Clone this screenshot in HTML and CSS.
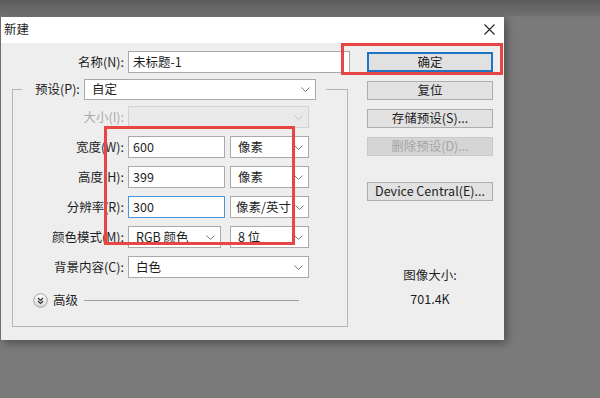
FILE: index.html
```html
<!DOCTYPE html>
<html>
<head>
    <meta charset="UTF-8">
    <title>新建</title>
    <link rel="stylesheet" href="styles.css">
</head>
<body>

<div class="dialog">
    <div class="titlebar">
        <span>新建</span>
        <svg class="close" width="11" height="11" viewBox="0 0 11 11"><path d="M0.5 0.5L10.5 10.5M10.5 0.5L0.5 10.5" stroke="#222" stroke-width="1.1" fill="none"/></svg>
    </div>
    <div class="main">
        <div class="form">
            <div class="name-row">
                <span class="label">名称(N):</span>
                <div class="field w-name">未标题-1</div>
            </div>
            <fieldset class="group">
                <legend>
                    <span class="legend-label">预设(P):</span>
                    <div class="select w-preset"><span>自定</span><svg class="chev" width="9" height="5" viewBox="0 0 9 5"><polyline points="0.5,0.5 4.5,4.5 8.5,0.5"/></svg></div>
                </legend>
                <div class="grid">
                    <span class="label off">大小(I):</span>
                    <div class="select off"><span></span><svg class="chev" width="9" height="5" viewBox="0 0 9 5"><polyline points="0.5,0.5 4.5,4.5 8.5,0.5"/></svg></div>

                    <span class="label">宽度(W):</span>
                    <div class="pair">
                        <div class="field w-num">600</div>
                        <div class="select w-unit"><span>像素</span><svg class="chev" width="9" height="5" viewBox="0 0 9 5"><polyline points="0.5,0.5 4.5,4.5 8.5,0.5"/></svg></div>
                    </div>

                    <span class="label">高度(H):</span>
                    <div class="pair">
                        <div class="field w-num">399</div>
                        <div class="select w-unit"><span>像素</span><svg class="chev" width="9" height="5" viewBox="0 0 9 5"><polyline points="0.5,0.5 4.5,4.5 8.5,0.5"/></svg></div>
                    </div>

                    <span class="label">分辨率(R):</span>
                    <div class="pair">
                        <div class="field w-num focus">300</div>
                        <div class="select w-unit tight"><span>像素/英寸</span><svg class="chev" width="9" height="5" viewBox="0 0 9 5"><polyline points="0.5,0.5 4.5,4.5 8.5,0.5"/></svg></div>
                    </div>

                    <span class="label">颜色模式(M):</span>
                    <div class="pair">
                        <div class="select w-mode"><span>RGB 颜色</span><svg class="chev" width="9" height="5" viewBox="0 0 9 5"><polyline points="0.5,0.5 4.5,4.5 8.5,0.5"/></svg></div>
                        <div class="select w-unit"><span>8 位</span><svg class="chev" width="9" height="5" viewBox="0 0 9 5"><polyline points="0.5,0.5 4.5,4.5 8.5,0.5"/></svg></div>
                    </div>

                    <span class="label">背景内容(C):</span>
                    <div class="select"><span>白色</span><svg class="chev" width="9" height="5" viewBox="0 0 9 5"><polyline points="0.5,0.5 4.5,4.5 8.5,0.5"/></svg></div>
                </div>
                <div class="adv">
                    <svg class="adv-icon" width="15" height="15" viewBox="0 0 15 15">
                        <defs><linearGradient id="g" x1="0" y1="0" x2="0" y2="1"><stop offset="0" stop-color="#ffffff"/><stop offset="1" stop-color="#d8d8d8"/></linearGradient></defs>
                        <circle cx="7.5" cy="7.5" r="6.8" fill="url(#g)" stroke="#a3a3a3"/>
                        <polyline points="5,5 7.5,7.5 10,5" fill="none" stroke="#333" stroke-width="1.2"/>
                        <polyline points="5,8 7.5,10.5 10,8" fill="none" stroke="#333" stroke-width="1.2"/>
                    </svg>
                    <span class="adv-text">高级</span>
                    <span class="adv-line"></span>
                </div>
            </fieldset>
        </div>
        <div class="side">
            <div class="btn primary">确定</div>
            <div class="btn">复位</div>
            <div class="btn">存储预设(S)...</div>
            <div class="btn off">删除预设(D)...</div>
            <div class="btn gap">Device Central(E)...</div>
            <div class="size-title">图像大小:</div>
            <div class="size-value">701.4K</div>
        </div>
    </div>
</div>

<div class="mark mark-ok"></div>
<div class="mark mark-size"></div>

</body>
</html>
```

FILE: styles.css
```css
*{ margin: 0; padding: 0; box-sizing: border-box;}
body { height: 398px; overflow: hidden; padding-top: 17px; background: #7a7a7a linear-gradient(#5b5b5b 0, #717171 16px, #7a7a7a 17px); font: 12.5px/1 "Noto Sans CJK SC", sans-serif; color: #1e1e1e; position: relative;}

.dialog { width: 504px; height: 323px; background: #eeeeee; box-shadow: 3px 3px 8px rgba(0,0,0,.35); border-left: 1px solid #6f6f6f;}
.titlebar { height: 26px; background: #fff; display: flex; align-items: center; justify-content: space-between; padding: 0 9px 2px 3px;}
.main { display: flex; height: 297px;}
.form { width: 354px;}
.side { width: 126px; margin-left: 12px;}

.label { text-align: right; white-space: nowrap;}
.label.off { color: #ababab;}
.name-row { display: flex; align-items: center; height: 22px; margin-top: 8px;}
.name-row .label { width: 127px; padding-right: 4px;}

.field { height: 22px; background: #fff; border: 1px solid #a9a9a9; display: flex; align-items: center; padding-left: 4px;}
.field.focus { border-color: #4a94d8;}
.w-name { width: 222px;}
.w-num { width: 97px;}

.select { height: 22px; background: #fff; border: 1px solid #a9a9a9; display: flex; align-items: center; justify-content: space-between; padding: 0 5px 0 7px; white-space: nowrap; overflow: hidden;}
.select.tight { padding-left: 5px; padding-right: 4px;}
.select.off { background: #e9e9e9; border-color: #d2d2d2;}
.select.off .chev polyline { stroke: #c4c4c4;}
.chev { flex: none;}
.chev polyline { fill: none; stroke: #7c7c7c; stroke-width: 1;}
.w-preset { width: 232px; height: 21px;}
.w-unit { width: 79px;}
.w-mode { width: 93px;}

.group { margin: 6px 0 0 11px; width: 336px; border: 1px solid #b6b6b6; padding: 0 0 18px 0;}
.group legend { margin-left: 9px; padding: 0 10px 0 13px; display: flex; align-items: center; height: 21px;}
.legend-label { width: 49px; white-space: nowrap;}

.grid { display: grid; grid-template-columns: 111px 181px; grid-auto-rows: 22px; column-gap: 4px; row-gap: 8px; margin-top: 6px; align-items: center;}
.pair { display: flex; justify-content: space-between;}

.adv { display: flex; align-items: center; height: 16px; margin-top: 14px; padding-left: 20px;}
.adv-text { margin-left: 5px;}
.adv-line { width: 215px; height: 1px; background: #9d9d9d; margin-left: 6px;}

.btn { height: 19px; display: flex; align-items: center; justify-content: center; background: #e1e1e1; border: 1px solid #adadad; margin-top: 9px; white-space: nowrap;}
.btn.primary { height: 20px; border: 2px solid #1f74c6;}
.btn.off { background: #d5d5d5; border-color: #cacaca; color: #a4a4a4;}
.btn.gap { margin-top: 26px;}
.size-title { text-align: center; margin-top: 67px; line-height: 14px;}
.size-value { text-align: center; margin-top: 10px; line-height: 14px;}

.mark { position: absolute; border: 3px solid #e84545;}
.mark-ok { left: 341px; top: 43px; width: 162px; height: 32px;}
.mark-size { left: 104px; top: 126px; width: 191px; height: 119px;}
```
